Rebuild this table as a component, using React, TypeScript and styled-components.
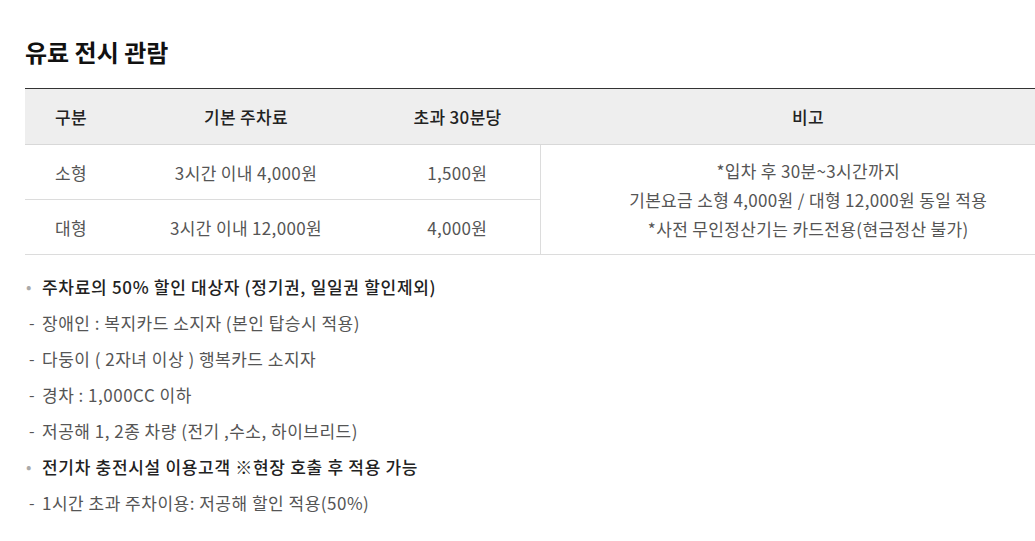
import React from "react";
import styled, { createGlobalStyle } from "styled-components";

const GlobalStyle = createGlobalStyle`
  html, body {
    margin: 0;
    padding: 0;
    background: #fff;
    overflow: hidden;
  }
  body {
    font-family: "Noto Sans CJK KR", "Noto Sans", sans-serif;
    color: #333;
  }
`;

const Page = styled.div`
  width: 1035px;
  overflow: hidden;
  padding: 34px 0 0 25px;
  box-sizing: border-box;
`;

const Title = styled.h2`
  margin: 0 0 18px;
  font-size: 24px;
  font-weight: 700;
  color: #111;
  line-height: 36px;
`;

const Table = styled.table`
  width: 1051px;
  border-collapse: collapse;
  table-layout: fixed;
  border-top: 1px solid #333;
  font-size: 17px;
  letter-spacing: 0.35px;
`;

const Th = styled.th`
  height: 55px;
  background: #eeeeee;
  color: #222;
  font-weight: 500;
  text-align: center;
  border-bottom: 1px solid #d8d8d8;
  padding: 0;
`;

const Td = styled.td<{ $divider?: boolean }>`
  height: 54px;
  color: #555;
  font-weight: 400;
  text-align: center;
  border-bottom: 1px solid #dcdcdc;
  border-left: ${({ $divider }) => ($divider ? "1px solid #dcdcdc" : "none")};
  padding: 0;
  line-height: 29px;
`;

const List = styled.ul`
  list-style: none;
  margin: 13px 0 0;
  padding: 0;
  font-size: 17px;
  letter-spacing: 0.5px;
`;

const Item = styled.li<{ $head?: boolean }>`
  display: flex;
  align-items: center;
  height: 36px;
  color: ${({ $head }) => ($head ? "#222" : "#555")};
  font-weight: ${({ $head }) => ($head ? 500 : 400)};
  letter-spacing: ${({ $head }) => ($head ? "0.7px" : "0.5px")};
`;

const Mark = styled.span<{ $head?: boolean }>`
  width: 17px;
  padding-left: ${({ $head }) => ($head ? "1px" : "4px")};
  box-sizing: border-box;
  color: ${({ $head }) => ($head ? "#aaa" : "#555")};
  font-size: 16px;
  font-weight: 400;
  flex-shrink: 0;
`;

const rows = [
  { type: "소형", base: "3시간 이내 4,000원", extra: "1,500원" },
  { type: "대형", base: "3시간 이내 12,000원", extra: "4,000원" },
];

const items = [
  { head: true, text: "주차료의 50% 할인 대상자 (정기권, 일일권 할인제외)" },
  { head: false, text: "장애인 : 복지카드 소지자 (본인 탑승시 적용)" },
  { head: false, text: "다둥이 ( 2자녀 이상 ) 행복카드 소지자" },
  { head: false, text: "경차 : 1,000CC 이하" },
  { head: false, text: "저공해 1, 2종 차량 (전기 ,수소, 하이브리드)" },
  { head: true, text: "전기차 충전시설 이용고객 ※현장 호출 후 적용 가능" },
  { head: false, text: "1시간 초과 주차이용: 저공해 할인 적용(50%)" },
];

function App() {
  return (
    <>
      <GlobalStyle />
      <Page>
        <Title>유료 전시 관람</Title>
        <Table>
          <colgroup>
            <col style={{ width: 92 }} />
            <col style={{ width: 258 }} />
            <col style={{ width: 165 }} />
            <col />
          </colgroup>
          <thead>
            <tr>
              <Th>구분</Th>
              <Th>기본 주차료</Th>
              <Th>초과 30분당</Th>
              <Th>비고</Th>
            </tr>
          </thead>
          <tbody>
            {rows.map((r, i) => (
              <tr key={r.type}>
                <Td>{r.type}</Td>
                <Td>{r.base}</Td>
                <Td>{r.extra}</Td>
                {i === 0 && (
                  <Td $divider rowSpan={2}>
                    *입차 후 30분~3시간까지
                    <br />
                    기본요금 소형 4,000원 / 대형 12,000원 동일 적용
                    <br />
                    *사전 무인정산기는 카드전용(현금정산 불가)
                  </Td>
                )}
              </tr>
            ))}
          </tbody>
        </Table>
        <List>
          {items.map((it) => (
            <Item key={it.text} $head={it.head}>
              <Mark $head={it.head}>{it.head ? "•" : "-"}</Mark>
              {it.text}
            </Item>
          ))}
        </List>
      </Page>
    </>
  );
}

export default App;
